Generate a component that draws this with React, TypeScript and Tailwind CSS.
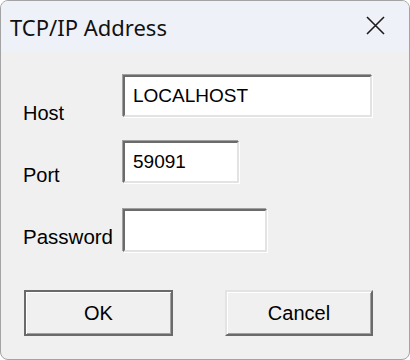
import React from 'react';

const font = { fontFamily: '"Liberation Sans", Arial, sans-serif' };

function Field({ value, width, height }: { value: string; width: string; height: string }) {
  return (
    <input
      readOnly
      value={value}
      className={`${width} ${height} box-border bg-white border-2 border-t-[#6b6b6b] border-l-[#6b6b6b] border-b-[#e3e3e3] border-r-[#e3e3e3] shadow-[-1px_-1px_0_#a0a0a0,1px_1px_0_#ffffff] pl-[8px] text-[19px] text-black outline-none`}
      style={font}
    />
  );
}

export default function App() {
  return (
    <div className="w-[410px] h-[360px] bg-white" style={font}>
      <div className="w-full h-full box-border border border-[#a3a3a3] rounded-[8px] overflow-hidden flex flex-col bg-[#f0f0f0]">
        {/* Title bar */}
        <div className="h-[51px] shrink-0 bg-[#eff1f8] flex justify-between items-start pl-[9px] pr-[24px]">
          <span className="pt-[12px] text-[22px] text-[#111] leading-[28px]" style={{ fontFamily: '"Noto Sans", "Segoe UI", sans-serif' }}>
            TCP/IP Address
          </span>
          <svg className="mt-[15px]" width="19" height="19" viewBox="0 0 19 19" fill="none" stroke="#1b1b1b" strokeWidth="1.6">
            <path d="M1 1L18 18M18 1L1 18" />
          </svg>
        </div>

        {/* Body */}
        <div className="flex-1 flex flex-col pl-[22px] pt-[23px]">
          <div className="flex h-[42px]">
            <span className="w-[100px] mt-[28px] text-[20px] leading-[20px] text-black">Host</span>
            <Field value="LOCALHOST" width="w-[249px]" height="h-[42px]" />
          </div>
          <div className="flex h-[42px] mt-[24px]">
            <span className="w-[100px] mt-[24px] text-[20px] leading-[20px] text-black">Port</span>
            <Field value="59091" width="w-[116px]" height="h-[42px]" />
          </div>
          <div className="flex h-[43px] mt-[26px]">
            <span className="w-[100px] mt-[18px] text-[20.5px] leading-[20px] text-black">Password</span>
            <Field value="" width="w-[144px]" height="h-[43px]" />
          </div>

          <div className="flex gap-[52px] mt-[38px] pl-[1px]">
            <button className="w-[149px] h-[46px] box-border border-2 border-[#6a6a6a] shadow-[inset_1px_1px_0_#ffffff,inset_-1px_-1px_0_#a0a0a0] bg-[#f0f0f0] text-[20px] text-black" style={font}>
              OK
            </button>
            <button className="w-[148px] h-[46px] box-border border-2 border-t-[#e3e3e3] border-l-[#e3e3e3] border-b-[#6a6a6a] border-r-[#6a6a6a] shadow-[inset_1px_1px_0_#ffffff,inset_-1px_-1px_0_#a0a0a0] bg-[#f0f0f0] text-[20px] text-black" style={font}>
              Cancel
            </button>
          </div>
        </div>
      </div>
    </div>
  );
}
